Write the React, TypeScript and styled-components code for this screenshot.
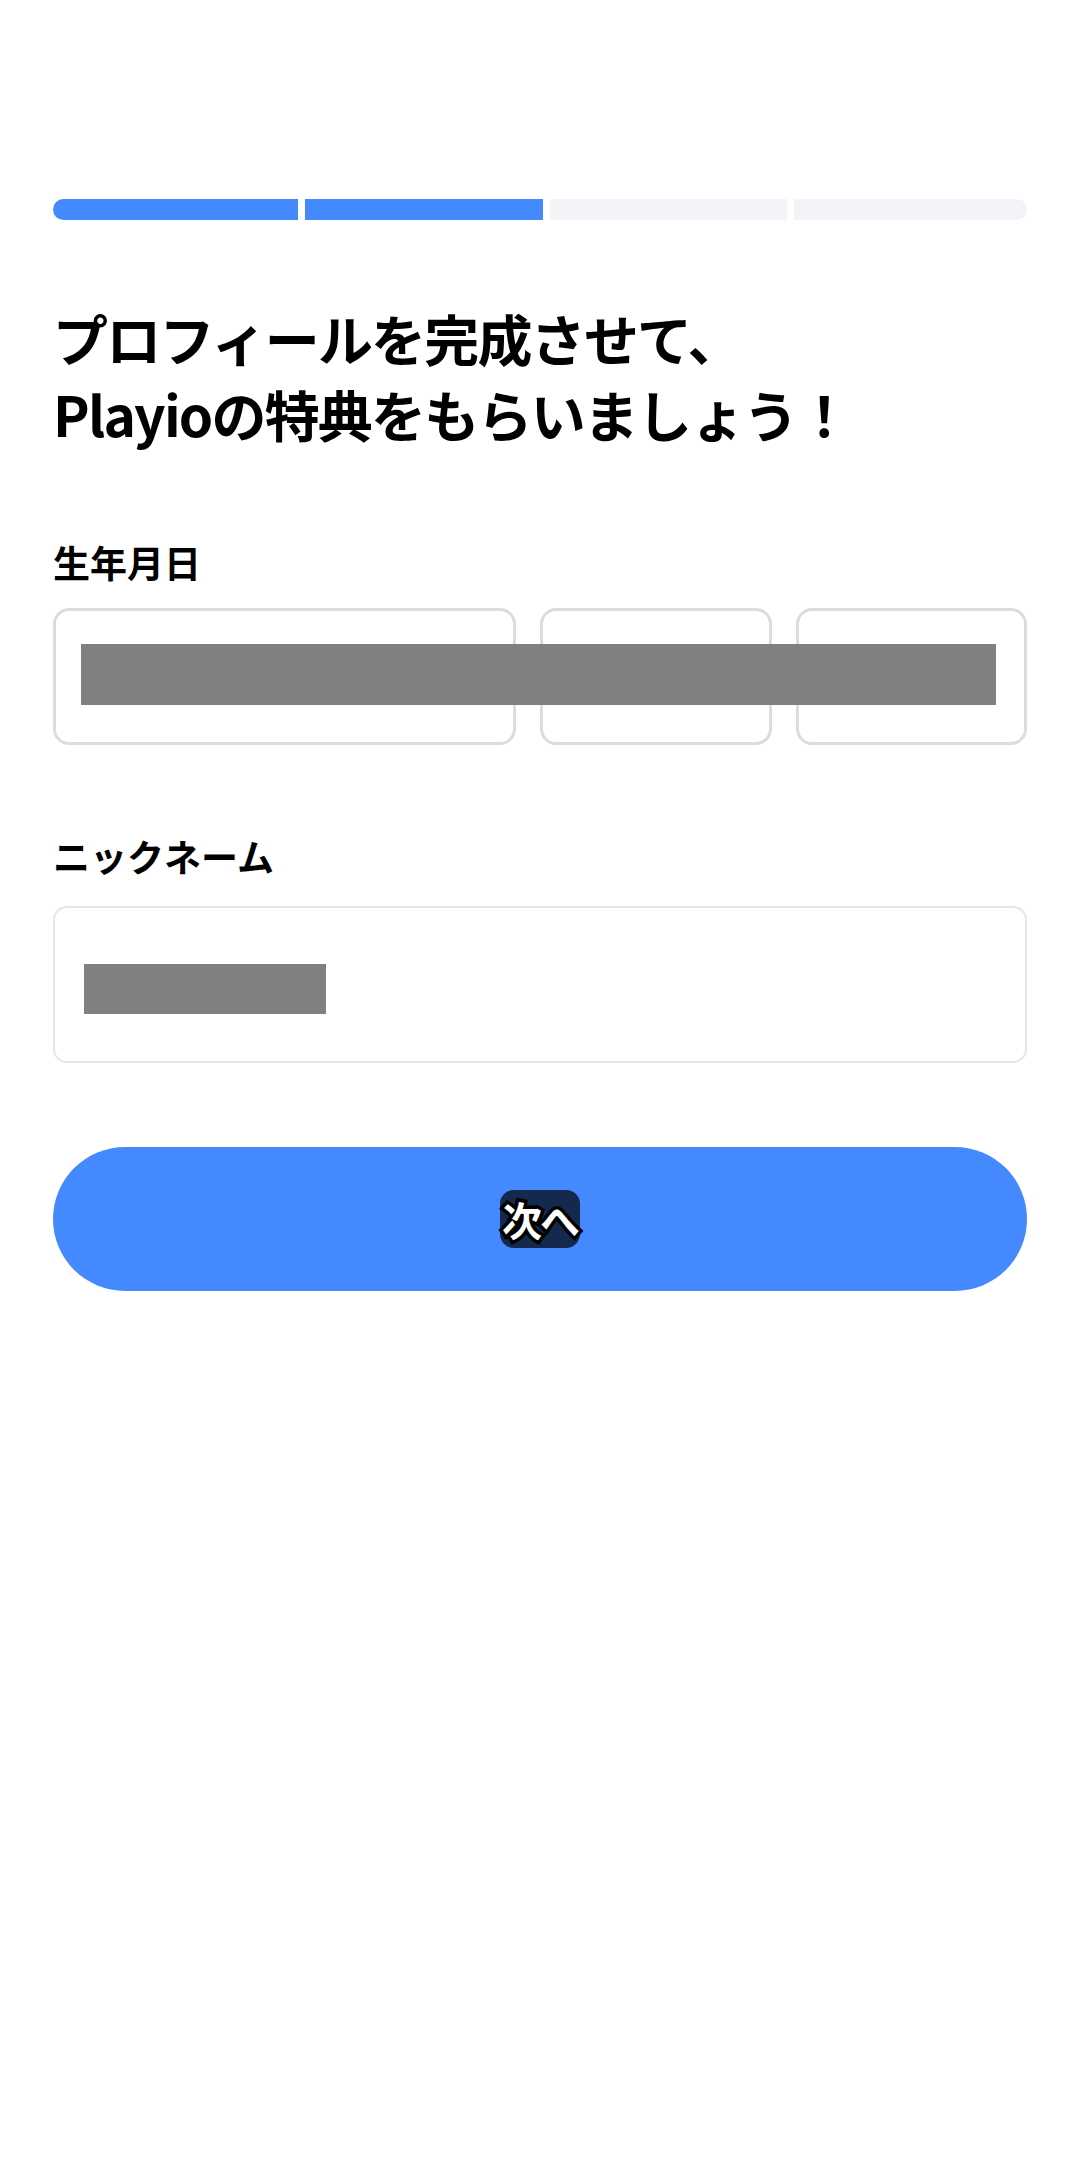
import styled, { createGlobalStyle } from "styled-components";

const GlobalStyle = createGlobalStyle`
  body {
    margin: 0;
    background: #ffffff;
    font-family: "Noto Sans CJK JP", "Noto Sans", sans-serif;
    color: #000000;
  }
`;

const Page = styled.div`
  width: 1080px;
  min-height: 2160px;
  box-sizing: border-box;
  padding: 199px 53px 0;
  display: flex;
  flex-direction: column;
`;

const Steps = styled.div`
  display: grid;
  grid-template-columns: 245fr 238fr 237fr 233fr;
  gap: 7px;
  height: 21px;
  border-radius: 11px;
  overflow: hidden;
`;

const Step = styled.div<{ $done: boolean }>`
  background: ${(p) => (p.$done ? "#4589ff" : "#f3f4f8")};
`;

const Title = styled.h1`
  margin: 79px 0 0;
  font-size: 55px;
  line-height: 76px;
  font-weight: 700;
  letter-spacing: -1.8px;
`;

const Label = styled.div<{ $top: number }>`
  margin-top: ${(p) => p.$top}px;
  font-size: 37px;
  line-height: 54px;
  font-weight: 700;
`;

const Field = styled.div<{ $top: number }>`
  position: relative;
  margin-top: ${(p) => p.$top}px;
`;

const DateRow = styled.div`
  display: grid;
  grid-template-columns: 2fr 1fr 1fr;
  gap: 24px;
`;

const DateBox = styled.div`
  height: 137px;
  box-sizing: border-box;
  border: 3px solid #dcdce0;
  border-radius: 16px;
  background: #fff;
`;

const TextBox = styled.div`
  height: 157px;
  box-sizing: border-box;
  border: 2px solid #e6e6e9;
  border-radius: 14px;
  background: #fff;
`;

// grey masks lying over the inputs
const Mask = styled.div<{ $left: number; $top: number; $w: number; $h: number }>`
  position: absolute;
  left: ${(p) => p.$left}px;
  top: ${(p) => p.$top}px;
  width: ${(p) => p.$w}px;
  height: ${(p) => p.$h}px;
  background: #808080;
`;

const NextButton = styled.button`
  margin-top: 84px;
  height: 144px;
  border: none;
  border-radius: 72px;
  background: #4589ff;
  display: flex;
  align-items: center;
  justify-content: center;
  cursor: pointer;
  padding: 0;
`;

const ButtonText = styled.span`
  display: inline-block;
  width: 80px;
  height: 58px;
  border-radius: 14px;
  background: #14294d;
  font-family: "Noto Sans CJK JP", sans-serif;
  font-size: 40px;
  line-height: 58px;
  font-weight: 700;
  color: #fff;
  text-align: center;
  letter-spacing: -2px;
  -webkit-text-stroke: 7px #000;
  paint-order: stroke fill;
`;

export default function App() {
  return (
    <>
      <GlobalStyle />
      <Page>
        <Steps>
          {[true, true, false, false].map((done, i) => (
            <Step key={i} $done={done} />
          ))}
        </Steps>

        <Title>
          プロフィールを完成させて、
          <br />
          Playioの特典をもらいましょう！
        </Title>

        <Label $top={84}>生年月日</Label>
        <Field $top={19}>
          <DateRow>
            <DateBox />
            <DateBox />
            <DateBox />
          </DateRow>
          <Mask $left={28} $top={36} $w={915} $h={61} />
        </Field>

        <Label $top={84}>ニックネーム</Label>
        <Field $top={23}>
          <TextBox />
          <Mask $left={31} $top={58} $w={242} $h={50} />
        </Field>

        <NextButton>
          <ButtonText>次へ</ButtonText>
        </NextButton>
      </Page>
    </>
  );
}
